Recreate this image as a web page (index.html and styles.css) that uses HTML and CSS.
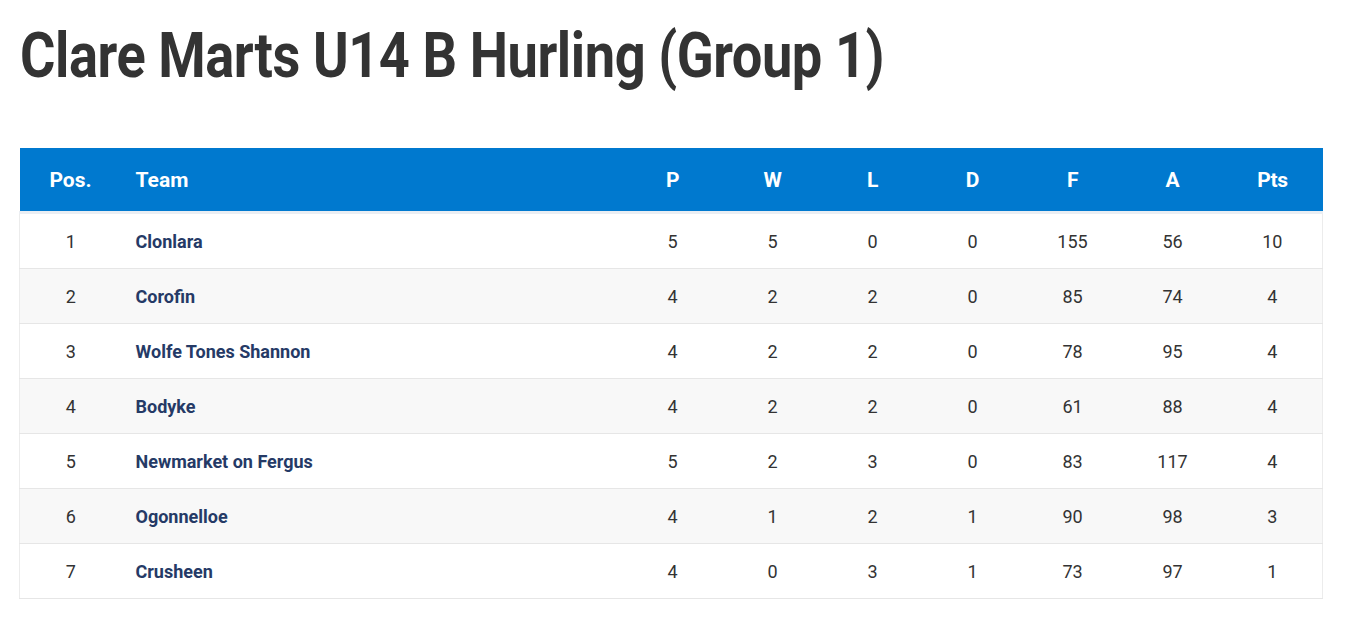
FILE: index.html
```html
<!DOCTYPE html>
<html>
<head>
<meta charset="utf-8">
<link rel="stylesheet" href="styles.css">
</head>
<body>
<h1 class="title"><span class="title-text">Clare Marts U14 B Hurling (Group 1)</span></h1>
<table class="league">
  <thead>
    <tr>
      <th class="pos">Pos.</th>
      <th class="team">Team</th>
      <th class="num">P</th>
      <th class="num">W</th>
      <th class="num">L</th>
      <th class="num">D</th>
      <th class="num">F</th>
      <th class="num">A</th>
      <th class="num">Pts</th>
    </tr>
  </thead>
  <tbody>
    <tr><td class="pos">1</td><td class="team">Clonlara</td><td class="num">5</td><td class="num">5</td><td class="num">0</td><td class="num">0</td><td class="num">155</td><td class="num">56</td><td class="num">10</td></tr>
    <tr><td class="pos">2</td><td class="team">Corofin</td><td class="num">4</td><td class="num">2</td><td class="num">2</td><td class="num">0</td><td class="num">85</td><td class="num">74</td><td class="num">4</td></tr>
    <tr><td class="pos">3</td><td class="team">Wolfe Tones Shannon</td><td class="num">4</td><td class="num">2</td><td class="num">2</td><td class="num">0</td><td class="num">78</td><td class="num">95</td><td class="num">4</td></tr>
    <tr><td class="pos">4</td><td class="team">Bodyke</td><td class="num">4</td><td class="num">2</td><td class="num">2</td><td class="num">0</td><td class="num">61</td><td class="num">88</td><td class="num">4</td></tr>
    <tr><td class="pos">5</td><td class="team">Newmarket on Fergus</td><td class="num">5</td><td class="num">2</td><td class="num">3</td><td class="num">0</td><td class="num">83</td><td class="num">117</td><td class="num">4</td></tr>
    <tr><td class="pos">6</td><td class="team">Ogonnelloe</td><td class="num">4</td><td class="num">1</td><td class="num">2</td><td class="num">1</td><td class="num">90</td><td class="num">98</td><td class="num">3</td></tr>
    <tr><td class="pos">7</td><td class="team">Crusheen</td><td class="num">4</td><td class="num">0</td><td class="num">3</td><td class="num">1</td><td class="num">73</td><td class="num">97</td><td class="num">1</td></tr>
  </tbody>
</table>
</body>
</html>
```

FILE: styles.css
```css
html, body {
  margin: 0;
  padding: 0;
  background: #ffffff;
}
body {
  padding: 0 29px 0 19px;
  font-family: Roboto, "Liberation Sans", sans-serif;
  color: #333333;
}
.title {
  margin: 20px 0 0 1px;
  font-size: 63px;
  line-height: 72px;
  font-weight: 700;
  color: #333333;
  white-space: nowrap;
}
.title-text {
  display: inline-block;
  transform: scaleX(0.86);
  transform-origin: left center;
  letter-spacing: -0.5px;
}
.league {
  margin-top: 56px;
  width: 1304px;
  border-collapse: collapse;
  table-layout: fixed;
}
.league thead tr {
  background: #0079cf;
  border-bottom: 3px solid #eaeef3;
}
.league th {
  height: 63px;
  padding: 0;
  color: #ffffff;
  font-size: 21px;
  font-weight: 700;
}
.league th.num {
  letter-spacing: -0.3px;
}
.league td {
  height: 54px;
  padding: 0;
  font-size: 18px;
  color: #333333;
  border-bottom: 1px solid #e6e6e6;
}
.league tbody tr {
  background: #ffffff;
}
.league tbody tr:nth-child(even) {
  background: #f8f8f8;
}
.league tbody td:first-child {
  border-left: 1px solid #ececec;
}
.league tbody td:last-child {
  border-right: 1px solid #ececec;
}
.pos {
  width: 102px;
  text-align: center;
}
.team {
  text-align: left;
  padding-left: 14px !important;
}
td.team {
  font-weight: 700;
  color: #253a66 !important;
}
.num {
  width: 100px;
  text-align: center;
}
```
